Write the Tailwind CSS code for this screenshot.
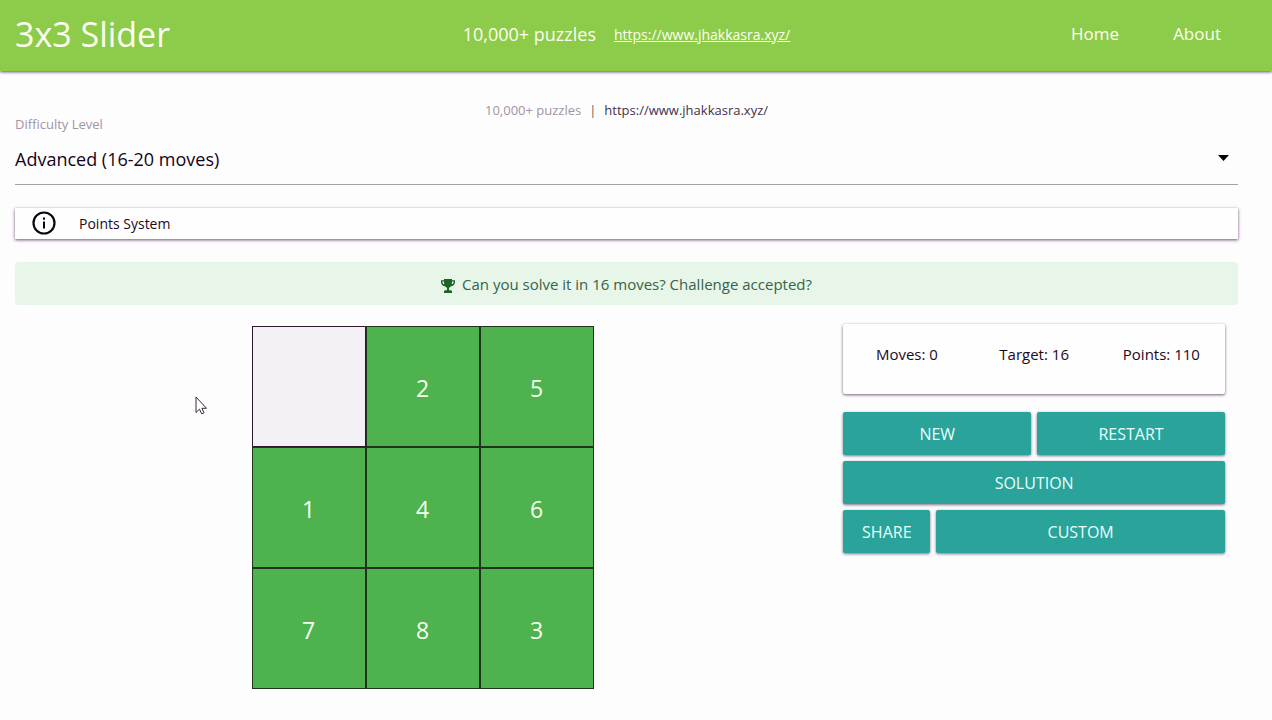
<!DOCTYPE html>
<html lang="en">
<head>
    <meta charset="UTF-8">
    <meta name="viewport" content="width=device-width, initial-scale=1.0">
    <title>3x3 Slider</title>
    <script src="https://cdn.jsdelivr.net/npm/@tailwindcss/browser@4"></script>
</head>
<body class="bg-[#fdfdfd] text-[#1c0a22] font-['Open_Sans','Noto_Sans',sans-serif]">
    <header class="grid grid-cols-[1fr_auto_1fr] items-center h-[71px] pb-[3px] pl-[15px] pr-[34px] bg-[#8dcb4a] text-[#fcffee] shadow-[0_1px_3px_rgba(60,20,70,0.8)]">
        <h1 class="text-[34px] leading-10">3x3 Slider</h1>
        <div class="flex items-center gap-[18px]">
            <span class="text-[18px]">10,000+ puzzles</span>
            <a href="https://www.jhakkasra.xyz/" class="text-[14px] underline">https://www.jhakkasra.xyz/</a>
        </div>
        <nav class="flex justify-end gap-[54px] pr-[17px] text-[17px]">
            <a href="#">Home</a>
            <a href="#">About</a>
        </nav>
    </header>

    <main class="pl-[15px] pr-[34px] pt-[31px]">
        <p class="flex justify-center gap-2 text-[13px] leading-4 text-[#a294a6]">
            <span>10,000+ puzzles</span>
            <span class="text-[#6b5a70]">|</span>
            <a href="https://www.jhakkasra.xyz/" class="text-[#45304b]">https://www.jhakkasra.xyz/</a>
        </p>

        <label for="level" class="block text-[13px] leading-3 text-[#a294a6]">Difficulty Level</label>
        <div class="relative mt-1">
            <select id="level" class="appearance-none block w-full h-[51px] border-b border-[#a79fab] text-[18px] text-[#12041a]">
                <option>Beginner (1-5 moves)</option>
                <option>Easy (6-10 moves)</option>
                <option>Intermediate (11-15 moves)</option>
                <option selected>Advanced (16-20 moves)</option>
            </select>
            <svg class="absolute right-[9px] top-[21px] pointer-events-none" width="11" height="6" viewBox="0 0 11 6">
                <path d="M0 0h11L5.5 6z" fill="#000"/>
            </svg>
        </div>

        <button type="button" class="flex items-center gap-[23px] w-full h-[31px] mt-[23px] pb-px pl-[17px] bg-[#fefefe] text-[14px] shadow-[0_1px_3px_rgba(60,20,70,0.75)]">
            <svg width="24" height="24" viewBox="0 0 24 24" fill="none" stroke="#0d0612">
                <circle cx="12" cy="12" r="10.5" stroke-width="2.2"/>
                <path d="M12 10.5v7" stroke-width="2"/>
                <path d="M12 6.500v2.200" stroke-width="2"/>
            </svg>
            Points System
        </button>

        <div class="flex items-center justify-center gap-[7px] h-[43px] mt-[23px] pt-0.5 rounded bg-[#e8f5e9] text-[15px] text-[#35644a]">
            <svg width="14" height="17" viewBox="0 -3 14 17">
                <path d="M3 0h8v1.300h3v1.900c0 2.300-1.800 3.800-4 4.100C9.400 8 8.700 8.500 8 8.800v2.400h1.500c.9 0 1.500.5 1.500 1.300V14H3v-1.500c0-.8.6-1.300 1.500-1.300H6V8.800C5.300 8.500 4.600 8 4 7.300 1.800 7 0 5.500 0 3.200V1.300h3zM1.300 2.600c0 1.400.7 2.500 2 2.900C3.100 4.500 3 3.600 3 2.600zM12.700 2.600H11c0 1-.1 1.900-.3 2.900 1.300-.4 2-1.500 2-2.900z" fill="#1c6426"/>
            </svg>
            <span>Can you solve it in 16 moves? Challenge accepted?</span>
        </div>

        <div class="grid grid-cols-3 mt-[18px]">
            <div class="relative col-span-2 flex justify-center pt-[3px]">
                <!-- board -->
                <div class="grid grid-cols-[repeat(3,114px)] auto-rows-[121px] text-[23px] text-[#f6fff0]">
                    <div class="border border-[#2c1a2c] bg-[#f3f1f5]"></div>
                    <button type="button" class="pt-1 border border-[#1f331f] bg-[#4eb34f]">2</button>
                    <button type="button" class="pt-1 border border-[#1f331f] bg-[#4eb34f]">5</button>
                    <button type="button" class="pt-1 border border-[#1f331f] bg-[#4eb34f]">1</button>
                    <button type="button" class="pt-1 border border-[#1f331f] bg-[#4eb34f]">4</button>
                    <button type="button" class="pt-1 border border-[#1f331f] bg-[#4eb34f]">6</button>
                    <button type="button" class="pt-1 border border-[#1f331f] bg-[#4eb34f]">7</button>
                    <button type="button" class="pt-1 border border-[#1f331f] bg-[#4eb34f]">8</button>
                    <button type="button" class="pt-1 border border-[#1f331f] bg-[#4eb34f]">3</button>
                </div>
                <!-- pointer -->
                <svg class="absolute left-[180px] top-[73px] pointer-events-none" width="13" height="19" viewBox="0 0 13 19">
                    <path d="M1 1v15.500l3.500-3.300 2.200 4.600 2.300-1-2.100-4.500h4.600z" fill="#fff" stroke="#3a2640"/>
                </svg>
            </div>

            <div class="px-[13px] pt-px">
                <div class="grid grid-cols-3 h-[70px] pt-[19px] rounded-xs bg-[#fefefe] text-center text-[15px] shadow-[0_1px_3px_rgba(60,20,70,0.7)]">
                    <span>Moves: 0</span>
                    <span>Target: 16</span>
                    <span>Points: 110</span>
                </div>
                <div class="flex flex-col gap-[6px] mt-[18px] text-[16px] text-[#e6fffa]">
                    <div class="flex gap-[6px]">
                        <button type="button" class="flex-1 h-[43px] pt-px rounded-xs bg-[#2aa39a] shadow-[0_1px_3px_rgba(40,20,60,0.6)]">NEW</button>
                        <button type="button" class="flex-1 h-[43px] pt-px rounded-xs bg-[#2aa39a] shadow-[0_1px_3px_rgba(40,20,60,0.6)]">RESTART</button>
                    </div>
                    <button type="button" class="h-[43px] pt-px rounded-xs bg-[#2aa39a] shadow-[0_1px_3px_rgba(40,20,60,0.6)]">SOLUTION</button>
                    <div class="flex gap-[6px]">
                        <button type="button" class="w-[87px] h-[43px] pt-px rounded-xs bg-[#2aa39a] shadow-[0_1px_3px_rgba(40,20,60,0.6)]">SHARE</button>
                        <button type="button" class="flex-1 h-[43px] pt-px rounded-xs bg-[#2aa39a] shadow-[0_1px_3px_rgba(40,20,60,0.6)]">CUSTOM</button>
                    </div>
                </div>
            </div>
        </div>
    </main>
</body>
</html>
